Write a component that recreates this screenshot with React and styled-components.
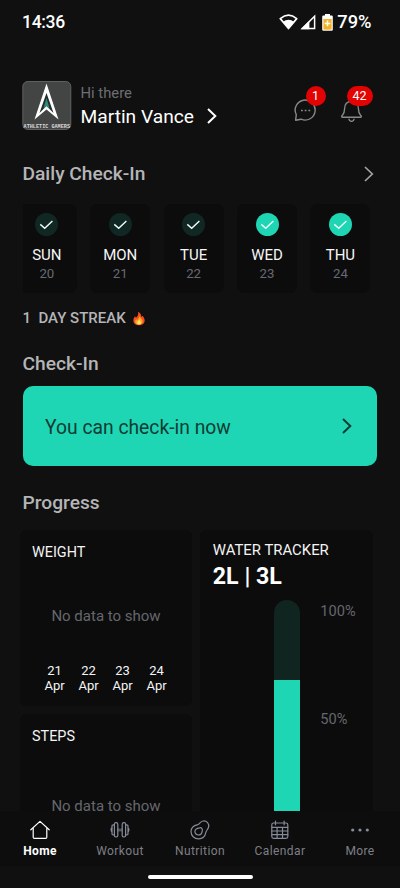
import React from "react";
import styled, { createGlobalStyle } from "styled-components";

const GlobalStyle = createGlobalStyle`
  * { box-sizing: border-box; }
  body { margin: 0; background: #101010; }
`;

const accent = "#1ed6b3";

const Screen = styled.div`
  width: 400px;
  height: 888px;
  display: flex;
  flex-direction: column;
  overflow: hidden;
  background: #101010;
  color: #f4f4f4;
  font-family: Roboto, "Liberation Sans", sans-serif;
`;

const Label = styled.span`
  display: block;
  white-space: pre;
  font-size: ${(p) => p.$size}px;
  line-height: ${(p) => p.$line || 20}px;
  font-weight: ${(p) => p.$weight || 400};
  letter-spacing: ${(p) => p.$track || 0}px;
  color: ${(p) => p.$color || "inherit"};
`;

const Spacer = styled.span`
  flex: none;
  width: ${(p) => p.$width}px;
`;

const StatusBar = styled.header`
  height: 44px;
  flex: none;
  display: flex;
  justify-content: space-between;
  align-items: center;
  padding: 0 28.5px 0 22px;
`;

const StatusIcons = styled.div`
  display: flex;
  align-items: center;
  svg { display: block; }
`;

const Content = styled.main`
  height: 767px;
  flex: none;
  overflow: hidden;
  display: flex;
  flex-direction: column;
`;

const Profile = styled.section`
  flex: none;
  display: flex;
  height: 49px;
  margin-top: 37px;
  padding: 0 23px 0 22px;
`;

const Names = styled.div`
  padding: 2px 0 0 8.5px;
  flex: 1;
`;

const NameRow = styled.div`
  display: flex;
  align-items: center;
  gap: 12px;
  height: 24px;
  margin-top: 1px;
`;

const NameText = styled(Label)`
  padding-top: 2px;
`;

const Actions = styled.div`
  display: flex;
  gap: 23.5px;
  padding: 18px 14px 0 0;
`;

const IconButton = styled.button`
  position: relative;
  width: 23px;
  height: 23px;
  padding: 0;
  border: 0;
  background: none;
  svg { display: block; }
`;

const Badge = styled.span`
  position: absolute;
  top: -13px;
  left: ${(p) => p.$left}px;
  width: ${(p) => p.$width}px;
  height: 20px;
  border-radius: 10px;
  background: #e30303;
  color: #fff;
  font: 400 12.5px/20px Roboto, sans-serif;
  text-align: center;
`;

const SectionHead = styled.div`
  flex: none;
  display: flex;
  justify-content: space-between;
  align-items: center;
  height: 24px;
  margin-top: ${(p) => p.$top}px;
  padding: 0 25px 0 22.5px;
`;

const Days = styled.div`
  flex: none;
  display: flex;
  justify-content: flex-end;
  gap: 13.4px;
  height: 89px;
  margin: 18px 29.6px 0 23px;
  overflow: hidden;
`;

const Day = styled.div`
  flex: none;
  width: 60px;
  border-radius: 7px;
  background: #0c0c0c;
  display: flex;
  flex-direction: column;
  align-items: center;
  padding-top: 9px;
`;

const Tick = styled.div`
  width: 23px;
  height: 23px;
  border-radius: 50%;
  background: ${(p) => (p.$active ? accent : "#102723")};
  margin-bottom: 9px;
  svg { display: block; }
`;

const Streak = styled.div`
  flex: none;
  display: flex;
  align-items: center;
  gap: 7px;
  height: 20px;
  margin: 15px 0 0 22.5px;
`;

const CheckInButton = styled.button`
  flex: none;
  display: flex;
  align-items: center;
  justify-content: space-between;
  width: 354.5px;
  height: 80px;
  margin: 10px 0 0 22.5px;
  padding: 0 24px 0 22.5px;
  border: 0;
  border-radius: 10px;
  background: ${accent};
  font-family: inherit;
  text-align: left;
`;

const ButtonText = styled(Label)`
  padding-top: 3px;
`;

const Cards = styled.div`
  flex: none;
  display: grid;
  grid-template-columns: 172px 173px;
  gap: 8px;
  margin: 15px 0 0 20px;
`;

const Stack = styled.div`
  display: flex;
  flex-direction: column;
  gap: 8px;
`;

const Card = styled.section`
  height: ${(p) => p.$height}px;
  border-radius: 6px;
  background: #0c0c0c;
  padding: 13px 12px 12px;
`;

const Empty = styled.div`
  display: flex;
  justify-content: center;
  margin-top: ${(p) => p.$top}px;
`;

const Axis = styled.div`
  display: grid;
  grid-template-columns: repeat(4, 34px);
  margin: 37px 0 0 5.5px;
  text-align: center;
`;

const WaterCard = styled(Card)`
  padding: 10px 12px 0 12.8px;
`;

const Gauge = styled.div`
  display: flex;
  gap: 20.5px;
  margin: 8px 0 0 61.5px;
`;

const Tube = styled.div`
  display: flex;
  align-items: flex-end;
  width: 25.5px;
  height: 240px;
  border-radius: 13px;
  overflow: hidden;
  background: #10251f;
`;

const Water = styled.div`
  width: 100%;
  height: 66.7%;
  background: ${accent};
`;

const Scale = styled.div`
  display: flex;
  flex-direction: column;
  gap: 87.5px;
  padding-top: 1px;
`;

const Nav = styled.nav`
  flex: none;
  height: 55px;
  display: grid;
  grid-template-columns: repeat(5, 80px);
  background: #0d0d0d;
`;

const NavItem = styled.a`
  display: flex;
  flex-direction: column;
  align-items: center;
  padding-top: 8px;
  color: ${(p) => (p.$active ? "#fff" : "#7d7f86")};
  svg { display: block; }
`;

const GestureArea = styled.div`
  height: 22px;
  display: flex;
  justify-content: center;
  padding-top: 9px;
`;

const GesturePill = styled.div`
  width: 105px;
  height: 4px;
  border-radius: 2px;
  background: #fff;
`;

const Chevron = ({ color, width = 2 }) => (
  <svg width="12" height="18" viewBox="0 0 12 18" fill="none" stroke={color} strokeWidth={width}>
    <path d="M2 2l7.3 7L2 16" />
  </svg>
);

const Logo = () => (
  <svg width="50" height="49" viewBox="0 0 50 49" overflow="visible">
    <rect x="0.8" y="0.5" width="48" height="48" rx="5" fill="#434444" stroke="#6c6d6d" strokeWidth="0.8" />
    <path d="M24.5 2.5L36.5 38.5L24.5 28.5L12.5 38.5Z" fill="#fff" />
    <path d="M24.5 12L31.5 32L24.5 25L17.5 32Z" fill="#252b2b" />
    <path d="M24.5 17L27.8 28L24.5 25L21.2 28Z" fill="#2b8c77" />
    <text x="1.6" y="46.8" textLength="46.4" lengthAdjust="spacingAndGlyphs" fill="#d8d8d8" fontFamily="Liberation Mono, monospace" fontWeight="700" fontSize="6">ATHLETIC GAMERS</text>
  </svg>
);

const Wifi = () => (
  <svg width="19" height="16" viewBox="0 0 19 16">
    <path d="M1.3 4.6Q9.5 -2.3 17.7 4.6L9.5 14.5Z" fill="none" stroke="#fff" strokeWidth="1.7" strokeLinejoin="round" />
    <path d="M3.8 7.9Q9.5 3.7 15.2 7.9L9.5 14.6Z" fill="#fff" />
  </svg>
);

const Signal = () => (
  <svg width="16" height="16" viewBox="0 0 16 16">
    <path d="M2.2 14.6H14.6V2.2Z" fill="none" stroke="#fff" strokeWidth="1.5" />
    <path d="M1 15.3H9.4V6.8Z" fill="#fff" />
  </svg>
);

const Battery = () => (
  <svg width="11" height="17" viewBox="0 0 11 17">
    <rect x="3" y="0" width="5" height="3" fill="#fff" />
    <rect x="0.2" y="1.6" width="10.6" height="15.2" rx="1.2" fill="#fff" />
    <rect x="1.4" y="5" width="8.2" height="10.6" fill="#f5b324" />
    <path d="M5.5 6.6v5.6M2.7 9.4h5.6" stroke="#fff" strokeWidth="1.5" />
  </svg>
);

const Chat = () => (
  <svg width="23" height="23" viewBox="0 0 23 23" fill="none" stroke="#898989" strokeWidth="1.4" strokeLinejoin="round">
    <path d="M1.6 21.2L2.3 15.7A10 10 0 1 1 7.1 20.2Z" />
    <path d="M7 11.5h1.8M10.7 11.5h1.8M14.4 11.5h1.8" strokeWidth="1.7" />
  </svg>
);

const Bell = () => (
  <svg width="23" height="23" viewBox="0 0 23 23" fill="none" stroke="#898989" strokeWidth="1.4" strokeLinejoin="round" strokeLinecap="round">
    <path d="M2.1 18.3C1.2 17.6 1.8 16.8 2.6 16C4 14.4 4.5 12.8 4.6 9.7C4.7 5 7 2.4 11.5 2.4S18.3 5 18.4 9.7C18.5 12.8 19 14.4 20.4 16C21.2 16.8 21.8 17.6 20.9 18.3Z" />
    <path d="M9 20.3C9.2 23 13.8 23 14 20.3" />
  </svg>
);

const Flame = () => (
  <svg width="12" height="15" viewBox="0 0 12 15">
    <path d="M5 0.8C7.5 2 8.3 4 8.3 6L9.6 4.8C11.2 7 12 8.6 11.6 10.5C11 13 8.8 14.2 6 14.2S0.7 12.8 0.4 10.2C0.2 8.2 1 6.4 2 5.2L3 6.8C5 5.2 5.7 3.2 5 0.8Z" fill="#f4511e" />
    <path d="M6.2 4.8C6.6 6.8 9.7 8 9.6 10.6C9.5 12.6 8 13.7 6 13.7S2.3 12.6 2.2 10.8C2.1 9.7 2.6 8.8 3.2 8.2L4.2 9.2C5.6 8 6.3 6.8 6.2 4.8Z" fill="#ffa820" />
    <path d="M6.1 8.6C6.5 9.8 8 10.3 7.9 11.7C7.8 12.9 7 13.4 6 13.4S4.2 12.8 4.2 11.7C4.2 10.4 5.7 10 6.1 8.6Z" fill="#ffe36b" />
  </svg>
);

const Glyph = ({ children, color = "#858b98" }) => (
  <svg width="22" height="22" viewBox="0 0 22 22" fill="none" stroke={color} strokeWidth="1.2" strokeLinejoin="round" strokeLinecap="round">
    {children}
  </svg>
);

const navItems = [
  { name: "Home", icon: <Glyph color="#fff"><path d="M1.8 10.8L11 2.4L20.2 10.8M4.2 9V18.2Q4.2 19.3 5.3 19.3H16.7Q17.8 19.3 17.8 18.2V9" /></Glyph> },
  { name: "Workout", icon: <Glyph><path d="M8.7 10.2h4.6M8.7 11.8h4.6" strokeWidth="0.8" /><rect x="5.4" y="3.7" width="3.4" height="14.2" rx="1.5" /><rect x="13.2" y="3.7" width="3.4" height="14.2" rx="1.5" /><path d="M5.4 5.8H4.2Q3 5.8 3 7V14.7Q3 15.9 4.2 15.9H5.4M16.6 5.8h1.2Q19 5.8 19 7V14.7Q19 15.9 17.8 15.9h-1.2M3 8.9Q2.1 8.9 2.1 10.8T3 12.8M19 8.9Q19.9 8.9 19.9 10.8T19 12.8" /></Glyph> },
  { name: "Nutrition", icon: <Glyph><path d="M8.7 5.6C10.8 4.9 11.1 2.3 14.2 2C17.8 1.6 20.4 4.6 19.6 8C19 10.6 17.2 11.4 16.8 13.6C16.1 17.3 13.3 19.8 9.6 19.8C5.3 19.8 2 16.6 2 12.6C2 9.2 4.9 6.5 8.7 5.6Z" /><path d="M10.6 8.8C12.6 8.4 13.7 9.8 13.3 11.6C13 14.6 11.4 16 9.4 16C7.4 16 5.9 14.6 5.9 12.6C5.9 10.4 8.2 9.1 10.6 8.8Z" /></Glyph> },
  { name: "Calendar", icon: <Glyph><rect x="2.8" y="4" width="16" height="15.4" rx="1.8" /><path d="M2.8 8.3h16M2.8 12h16M2.8 15.7h16M8.1 8.3v11.1M13.5 8.3v11.1M6.5 2v3.7M15.1 2v3.7" /></Glyph> },
  { name: "More", icon: <Glyph><g fill="#858b98" stroke="none"><circle cx="3.7" cy="11" r="1.6" /><circle cx="11" cy="11" r="1.6" /><circle cx="18.3" cy="11" r="1.6" /></g></Glyph> },
];

const days = [["SUN", 20], ["MON", 21], ["TUE", 22], ["WED", 23], ["THU", 24]];

export default function App() {
  return (
    <Screen>
      <GlobalStyle />
      <StatusBar>
        <Label $size={17.5} $weight={500} $track={-0.3} $color="#fff">14:36</Label>
        <StatusIcons>
          <Wifi />
          <Spacer $width={2.5} />
          <Signal />
          <Spacer $width={6} />
          <Battery />
          <Spacer $width={4} />
          <Label $size={18.3} $weight={500} $color="#fff">79%</Label>
        </StatusIcons>
      </StatusBar>
      <Content>
        <Profile>
          <Logo />
          <Names>
            <Label $size={14.8} $color="#6d6e72">Hi there</Label>
            <NameRow>
              <NameText $size={19.2} $line={24} $color="#fff">Martin Vance</NameText>
              <Chevron color="#fff" />
            </NameRow>
          </Names>
          <Actions>
            <IconButton aria-label="Messages"><Chat /><Badge $left={12} $width={20}>1</Badge></IconButton>
            <IconButton aria-label="Notifications"><Bell /><Badge $left={6.5} $width={26}>42</Badge></IconButton>
          </Actions>
        </Profile>
        <SectionHead $top={32}>
          <Label $size={19.2} $weight={500} $color="#b5b5b8">Daily Check-In</Label>
          <Chevron color="#a2a2a2" width={1.7} />
        </SectionHead>
        <Days>
          {days.map(([name, date], i) => (
            <Day key={name}>
              <Tick $active={i > 2}>
                <svg width="23" height="23" viewBox="0 0 23 23" fill="none" stroke="#eefffa" strokeWidth="1.4"><path d="M5.3 11.4L9.7 15.2L17.4 8" /></svg>
              </Tick>
              <Label $size={15} $color="#f6f6f6">{name}</Label>
              <Label $size={13.2} $line={18} $color="#686a72">{date}</Label>
            </Day>
          ))}
        </Days>
        <Streak>
          <Label $size={15} $weight={500} $color="#b5b5b8">{"1  DAY STREAK"}</Label>
          <Flame />
        </Streak>
        <SectionHead $top={24}>
          <Label $size={19.2} $weight={500} $color="#b5b5b8">Check-In</Label>
        </SectionHead>
        <CheckInButton>
          <ButtonText $size={19.3} $color="#103b34">You can check-in now</ButtonText>
          <Chevron color="#103b34" />
        </CheckInButton>
        <SectionHead $top={25}>
          <Label $size={19.2} $weight={500} $color="#b5b5b8">Progress</Label>
        </SectionHead>
        <Cards>
          <Stack>
            <Card $height={176}>
              <Label $size={14.4}>WEIGHT</Label>
              <Empty $top={43}><Label $size={15} $color="#65676d">No data to show</Label></Empty>
              <Axis>
                {[21, 22, 23, 24].map((d) => (
                  <div key={d}>
                    <Label $size={13} $line={15}>{d}</Label>
                    <Label $size={13} $line={15}>Apr</Label>
                  </div>
                ))}
              </Axis>
            </Card>
            <Card $height={176}>
              <Label $size={14.4}>STEPS</Label>
              <Empty $top={54}><Label $size={15} $line={10} $color="#65676d">No data to show</Label></Empty>
            </Card>
          </Stack>
          <WaterCard $height={360}>
            <Label $size={14.9}>WATER TRACKER</Label>
            <Label $size={23.2} $line={32} $weight={700} $color="#fff">2L | 3L</Label>
            <Gauge>
              <Tube><Water /></Tube>
              <Scale>
                <Label $size={14.6} $color="#65676d">100%</Label>
                <Label $size={14.6} $color="#65676d">50%</Label>
              </Scale>
            </Gauge>
          </WaterCard>
        </Cards>
      </Content>
      <Nav>
        {navItems.map(({ name, icon }, i) => (
          <NavItem key={name} $active={i === 0}>
            {icon}
            <Label $size={12} $weight={i === 0 ? 700 : 400} $track={0.4}>{name}</Label>
          </NavItem>
        ))}
      </Nav>
      <GestureArea><GesturePill /></GestureArea>
    </Screen>
  );
}
